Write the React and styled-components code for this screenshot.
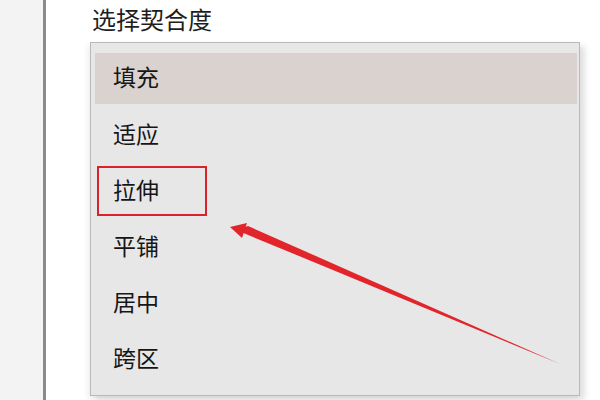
import styled, { createGlobalStyle } from "styled-components";

const GlobalStyle = createGlobalStyle`
  html, body {
    margin: 0;
    padding: 0;
    background: #ffffff;
  }
  body {
    font-family: "Noto Sans CJK SC", "Noto Sans", sans-serif;
  }
`;

const Page = styled.div`
  display: flex;
  width: 600px;
  height: 400px;
  overflow: hidden;
  background: #ffffff;
`;

const Sidebar = styled.div`
  width: 43px;
  flex-shrink: 0;
  background: #f3f3f3;
  border-right: 3px solid #8a8a8a;
`;

const Content = styled.div`
  flex: 1;
  display: flex;
  flex-direction: column;
  padding-left: 44px;
`;

const Title = styled.div`
  margin: 0 0 0 2px;
  font-size: 24px;
  line-height: 38px;
  color: #1e1e1e;
  height: 42px;
`;

const Menu = styled.div`
  position: relative;
  width: 482px;
  height: 344px;
  padding: 8px 2px 0 4px;
  background: #e7e7e7;
  border: 1px solid #b9b9b9;
  box-shadow: 5px 4px 6px rgba(0, 0, 0, 0.12), -3px 3px 5px rgba(0, 0, 0, 0.06);
`;

const Item = styled.div`
  display: flex;
  align-items: center;
  box-sizing: border-box;
  height: ${(p) => (p.$selected ? "51px" : "56px")};
  margin: ${(p) => (p.$selected ? "2px 0 3px" : "0")};
  padding: 0 0 5px 18px;
  font-size: 23px;
  color: #161616;
  background: ${(p) => (p.$selected ? "#d9d2cf" : "transparent")};
`;

const Marker = styled.div`
  position: absolute;
  left: 6px;
  top: 123px;
  width: 106px;
  height: 46px;
  border: 2px solid #d8232c;
`;

const Arrow = styled.svg`
  position: absolute;
  left: 0;
  top: 0;
  pointer-events: none;
`;

const items = ["填充", "适应", "拉伸", "平铺", "居中", "跨区"];

export default function App() {
  return (
    <>
      <GlobalStyle />
      <Page>
        <Sidebar />
        <Content>
          <Title>选择契合度</Title>
          <Menu>
            {items.map((label, i) => (
              <Item key={label} $selected={i === 0}>
                {label}
              </Item>
            ))}
            <Marker />
            <Arrow width="490" height="354" viewBox="0 0 490 354">
              {/* pointer from lower right back up to the boxed item */}
              <path d="M469 321 L150 189 L148 186 L157 183 Z" fill="#e2242b" />
              <path d="M139 184 L156 180 L151 195 Z" fill="#e2242b" />
            </Arrow>
          </Menu>
        </Content>
      </Page>
    </>
  );
}
